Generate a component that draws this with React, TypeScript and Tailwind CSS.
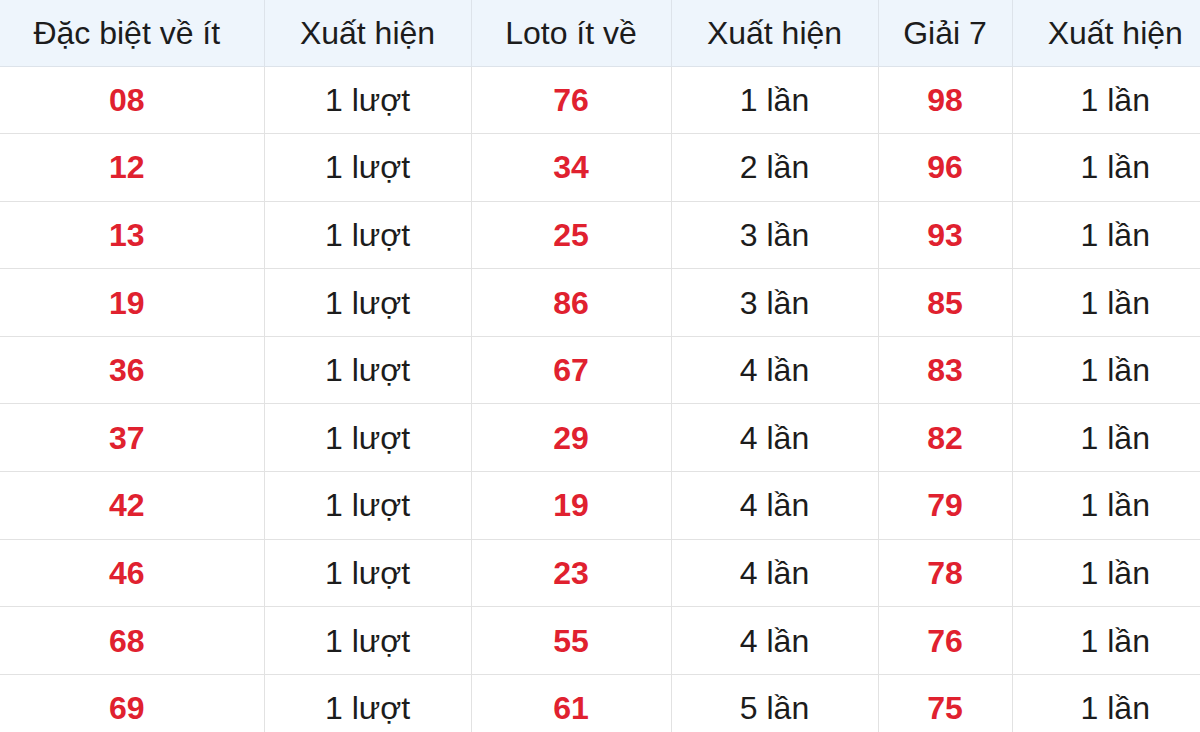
const rows: [string, string, string, string, string, string][] = [
  ["08", "1 lượt", "76", "1 lần", "98", "1 lần"],
  ["12", "1 lượt", "34", "2 lần", "96", "1 lần"],
  ["13", "1 lượt", "25", "3 lần", "93", "1 lần"],
  ["19", "1 lượt", "86", "3 lần", "85", "1 lần"],
  ["36", "1 lượt", "67", "4 lần", "83", "1 lần"],
  ["37", "1 lượt", "29", "4 lần", "82", "1 lần"],
  ["42", "1 lượt", "19", "4 lần", "79", "1 lần"],
  ["46", "1 lượt", "23", "4 lần", "78", "1 lần"],
  ["68", "1 lượt", "55", "4 lần", "76", "1 lần"],
  ["69", "1 lượt", "61", "5 lần", "75", "1 lần"],
];

const headers = ["Đặc biệt về ít", "Xuất hiện", "Loto ít về", "Xuất hiện", "Giải 7", "Xuất hiện"];

// first column is cropped a little on the left, last one on the right
const edge = (i: number) => (i === 0 ? "pr-[10px]" : i === 5 ? "pl-[18px]" : "");

export default function App() {
  return (
    <div className="w-[1200px] h-[732px] overflow-hidden bg-white font-['Liberation_Sans',Arial,sans-serif] text-[32px] text-[#1c1c1c]">
      <table className="w-[1200px] table-fixed border-collapse">
        <colgroup>
          <col className="w-[264px]" />
          <col className="w-[207px]" />
          <col className="w-[200px]" />
          <col className="w-[207px]" />
          <col className="w-[134px]" />
          <col className="w-[188px]" />
        </colgroup>
        <thead>
          <tr className="h-[66px] bg-[#eef5fc]">
            {headers.map((h, i) => (
              <th
                key={i}
                className={`font-normal text-center border-b border-[#dde3ea] ${
                  i > 0 ? "border-l" : ""
                } ${edge(i)}`}
              >
                {h}
              </th>
            ))}
          </tr>
        </thead>
        <tbody>
          {rows.map((r, ri) => (
            <tr key={ri} className="h-[67.6px]">
              {r.map((cell, ci) => (
                <td
                  key={ci}
                  className={`text-center border-b border-[#e2e2e2] ${
                    ci > 0 ? "border-l" : ""
                  } ${ci % 2 === 0 ? "font-bold text-[#e0212f]" : ""} ${edge(ci)}`}
                >
                  {cell}
                </td>
              ))}
            </tr>
          ))}
        </tbody>
      </table>
    </div>
  );
}
